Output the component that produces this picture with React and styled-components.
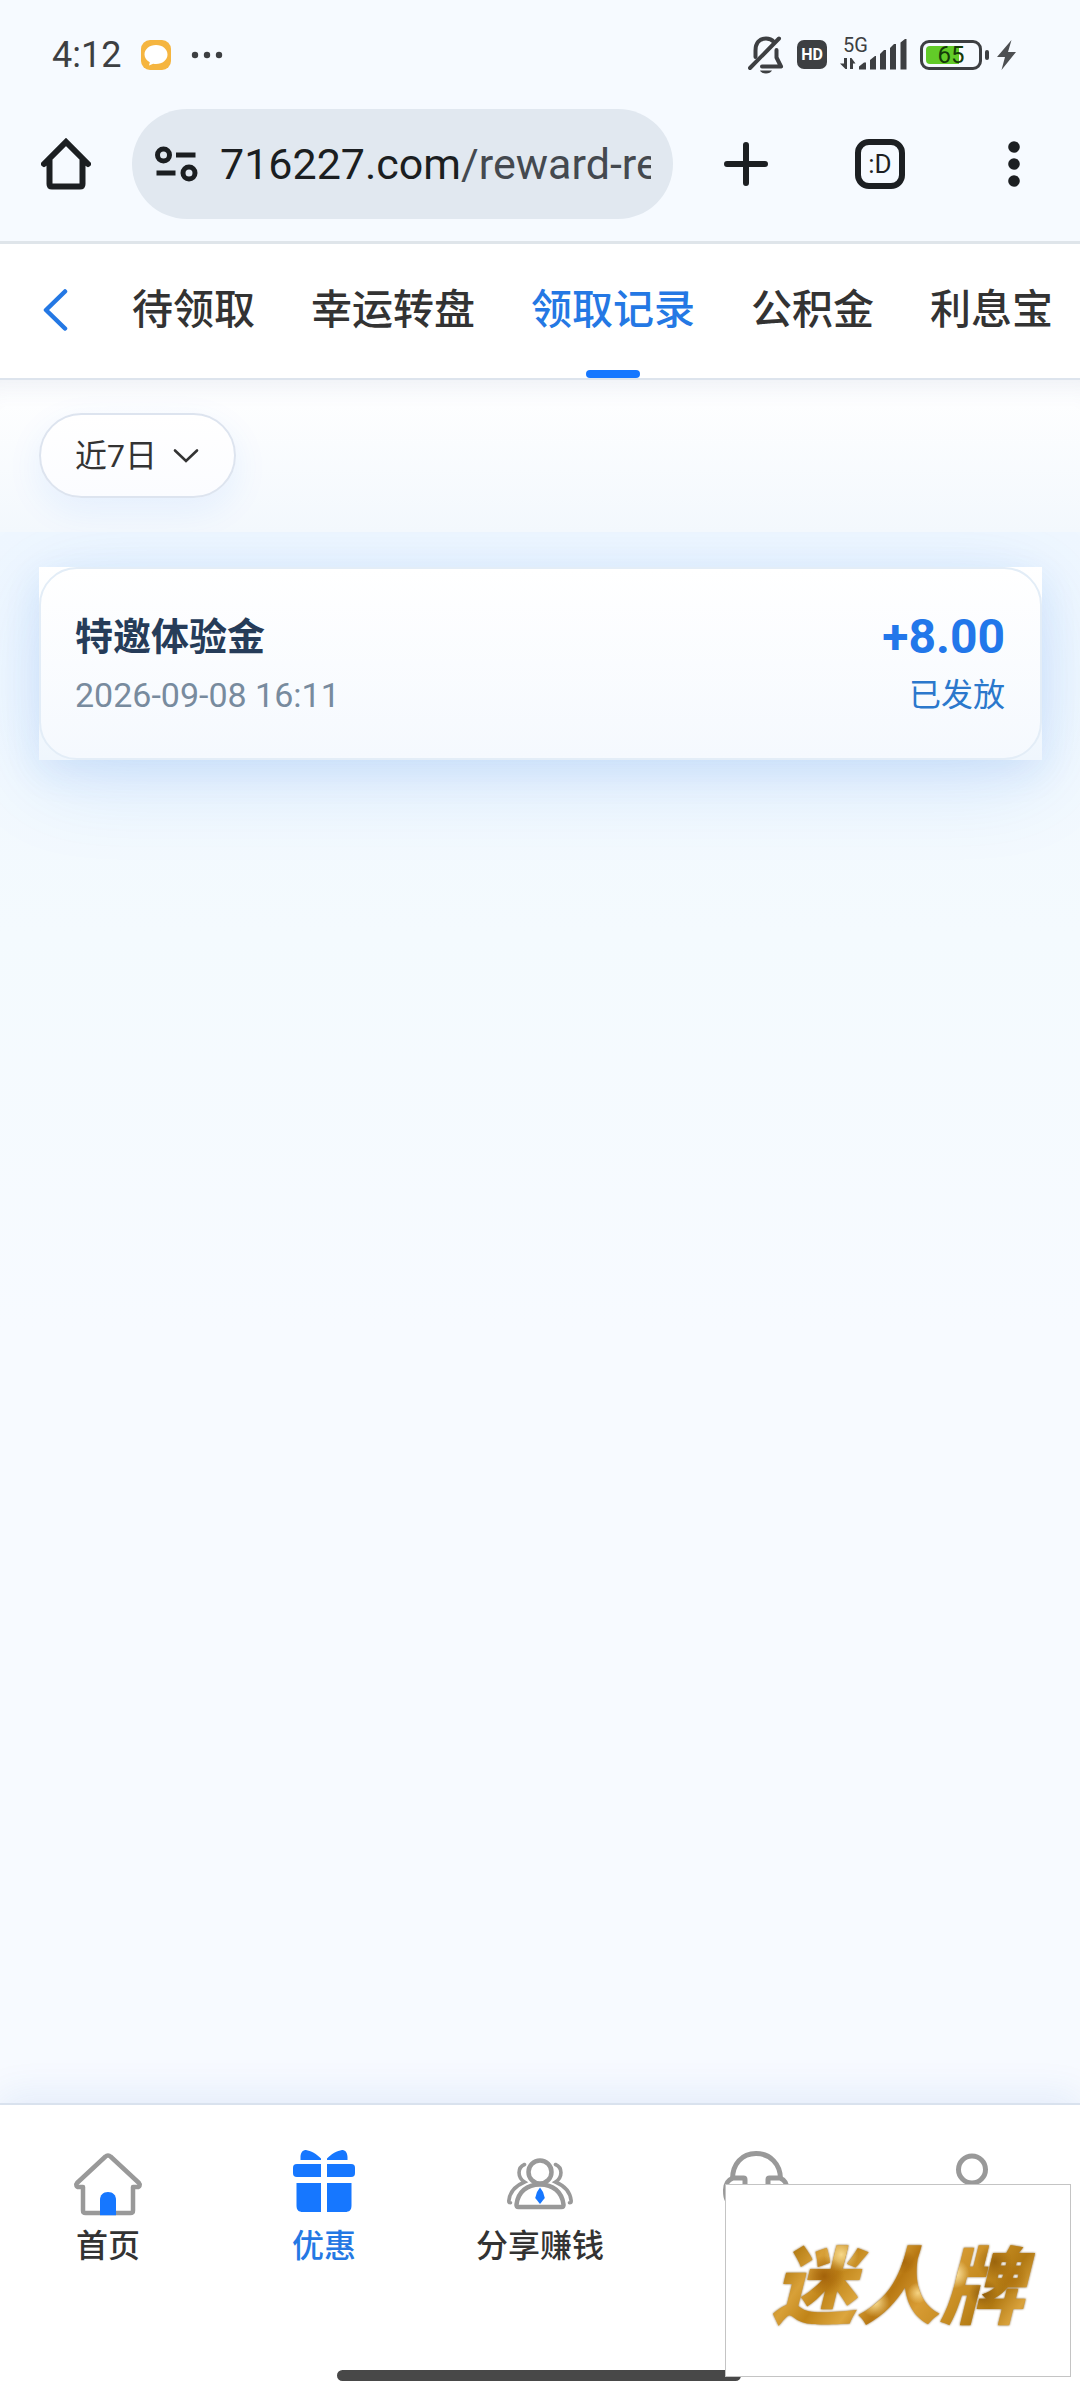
import { useState } from "react";
import styled, { createGlobalStyle } from "styled-components";

const GlobalStyle = createGlobalStyle`
  *, *::before, *::after {
    box-sizing: border-box;
  }

  body {
    margin: 0;
    background: #f6faff;
    color: #333;
    font-family: Roboto, "Noto Sans CJK SC", sans-serif;
  }

  button {
    padding: 0;
    border: 0;
    background: none;
    color: inherit;
    font: inherit;
    cursor: pointer;
  }

  svg {
    display: block;
    flex: none;
  }
`;

const Page = styled.div`
  display: flex;
  flex-direction: column;
  min-height: 100vh;
`;

const BrowserChrome = styled.div`
  background: #f6faff;
  border-bottom: 3px solid #dfe5ea;
`;

const StatusBar = styled.div`
  display: flex;
  align-items: center;
  justify-content: space-between;
  height: 109px;
  padding: 0 64px 0 52px;
  color: #3d3f42;
`;

const StatusGroup = styled.div`
  display: flex;
  align-items: center;
  gap: ${({ $gap }) => $gap}px;
`;

const Clock = styled.time`
  font-size: 36px;
  line-height: 40px;
`;

const HdBadge = styled.span`
  width: 30px;
  border-radius: 7px;
  background: #3d3f42;
  color: #fff;
  font-size: 16px;
  font-weight: 700;
  line-height: 29px;
  text-align: center;
`;

const Network = styled.div`
  display: flex;
  position: relative;

  span {
    position: absolute;
    top: -4px;
    left: 3px;
    font-size: 20px;
    line-height: 20px;
  }
`;

const Battery = styled.div`
  display: flex;
  align-items: center;
  gap: 3px;

  &::after {
    content: "";
    width: 4px;
    height: 10px;
    border-radius: 2px;
    background: #3d3f42;
  }
`;

const BatteryBody = styled.div`
  width: 62px;
  height: 30px;
  padding: 3px;
  border: 3px solid #3d3f42;
  border-radius: 9px;
  color: #143a08;
  font-size: 24px;
  line-height: 18px;
  text-align: center;
`;

const BatteryLevel = styled.div`
  border-radius: 4px;
  background: linear-gradient(90deg, #62cb28 65%, transparent 65%);
`;

const Toolbar = styled.div`
  display: flex;
  align-items: center;
  height: 132px;
  padding: 0 36px 22px 36px;
`;

const ToolButton = styled.button`
  display: grid;
  place-items: center;
  width: 60px;
  height: 60px;
  color: #1c1f22;
`;

const ToolActions = styled.div`
  display: flex;
  align-items: center;
  gap: 74px;
  margin-left: 43px;
`;

const AddressBar = styled.div`
  display: flex;
  flex: 1;
  align-items: center;
  gap: 22px;
  min-width: 0;
  height: 110px;
  margin-left: 36px;
  padding: 0 22px;
  border-radius: 55px;
  background: #e1e8f0;
`;

const Url = styled.span`
  flex: 1;
  overflow: hidden;
  color: #44494f;
  font-size: 43px;
  line-height: 56px;
  white-space: nowrap;

  b {
    color: #1b1e21;
    font-weight: 400;
  }
`;

const TabCount = styled.span`
  width: 50px;
  border: 6px solid #1c1f22;
  border-radius: 14px;
  font-size: 26px;
  line-height: 38px;
  text-align: center;
`;

const TabBar = styled.nav`
  display: flex;
  height: 136px;
  padding-left: 39px;
  overflow: hidden;
  border-bottom: 2px solid #dde4ed;
  background: #fff;
`;

const BackButton = styled.button`
  width: 30px;
  margin-right: 63px;
  color: #2478e4;
`;

const TabList = styled.div`
  display: flex;
  gap: 56px;
`;

const Tab = styled.button`
  display: flex;
  flex: none;
  flex-direction: column;
  align-items: center;
  padding-top: 39px;
  color: ${({ $active }) => ($active ? "#2478e4" : "#333")};
  font-size: 41px;
  font-weight: 500;
  line-height: 54px;
  white-space: nowrap;

  &::after {
    content: "";
    width: 54px;
    height: 8px;
    margin-top: 33px;
    border-radius: 4px;
    background: ${({ $active }) => ($active ? "#1677ff" : "transparent")};
  }
`;

const FilterBar = styled.div`
  padding: 33px 39px 34px;
  background: linear-gradient(180deg, #fff 0%, #f3f8fd 100%);
  box-shadow: inset 0 28px 24px -22px rgba(40, 80, 140, 0.09);
`;

const FilterButton = styled.button`
  display: flex;
  align-items: center;
  gap: 16px;
  height: 85px;
  padding: 0 35px 0 34px;
  border: 2px solid #dde4ef;
  border-radius: 43px;
  background: linear-gradient(180deg, #fff, #fbfcff);
  box-shadow: 0 12px 36px rgba(22, 119, 255, 0.08);
  font-size: 32px;
  line-height: 44px;
`;

const Records = styled.main`
  flex: 1;
  padding: 35px 38px 35px 39px;
  overflow: hidden;
  background: linear-gradient(180deg, #eff7ff 0, #f4fafe 400px, #f7faff 800px);
`;

/* the square wrapper carries the shadow, the rounded panel sits inside */
const RecordShell = styled.article`
  background: linear-gradient(180deg, #fff, #eff6fd);
  box-shadow: 0 18px 90px rgba(22, 110, 240, 0.14),
    0 12px 36px rgba(22, 100, 210, 0.09);
`;

const RecordCard = styled.div`
  display: flex;
  justify-content: space-between;
  padding: 42px 35px 41px 34px;
  border: 2px solid #e3edf7;
  border-radius: 38px;
  background: linear-gradient(180deg, #fff, #f5f9fe);
`;

const RecordColumn = styled.div`
  display: flex;
  flex-direction: column;
  align-items: ${({ $end }) => ($end ? "flex-end" : "flex-start")};
  gap: 10px;
`;

const RecordTitle = styled.h2`
  margin: 0;
  color: #263c59;
  font-size: 38px;
  font-weight: 700;
  line-height: 52px;
`;

const RecordAmount = styled.strong`
  color: #2277ea;
  font-size: 48px;
  font-weight: 700;
  line-height: 52px;
`;

const RecordMeta = styled.span`
  color: ${({ $status }) => ($status ? "#2b78cc" : "#788b9e")};
  font-size: ${({ $status }) => ($status ? 32 : 34)}px;
  line-height: 44px;
`;

const BottomNav = styled.nav`
  display: grid;
  grid-template-columns: repeat(5, 1fr);
  height: 297px;
  border-top: 2px solid #d9e2ee;
  background: #fff;
  box-shadow: 0 -8px 36px rgba(22, 90, 200, 0.09);
`;

const NavLink = styled.a`
  display: flex;
  flex-direction: column;
  align-items: center;
  gap: 6px;
  padding-top: 41px;
  color: ${({ $active }) => ($active ? "#2478e4" : "#333")};
  font-size: 32px;
  font-weight: 500;
  line-height: 44px;
  text-decoration: none;
  white-space: nowrap;
`;

const HomeIndicator = styled.div`
  position: fixed;
  bottom: 19px;
  left: 50%;
  width: 404px;
  height: 11px;
  margin-left: -203px;
  border-radius: 6px;
  background: #484848;
`;

const Watermark = styled.div`
  display: grid;
  position: fixed;
  right: 9px;
  bottom: 23px;
  place-items: center;
  width: 346px;
  height: 193px;
  border: 1px solid #c4c4c4;
  background: #fff;
`;

const WatermarkText = styled.span`
  padding: 0 16px;
  background: radial-gradient(circle at 24% 46%, #a3620a 0, transparent 9%),
    radial-gradient(circle at 52% 34%, #a8680c 0, transparent 7%),
    radial-gradient(circle at 84% 34%, #9a640c 0, transparent 7%),
    radial-gradient(circle at 80% 60%, #8f5c0c 0, transparent 6%),
    radial-gradient(circle at 90% 48%, #b07410 0, transparent 6%),
    radial-gradient(circle at 30% 28%, #f6d88a 0, transparent 8%),
    radial-gradient(circle at 42% 68%, #f8dc90 0, transparent 8%),
    radial-gradient(circle at 57% 60%, #f5d382 0, transparent 6%),
    radial-gradient(circle at 70% 44%, #ffe9a8 0, transparent 7%),
    linear-gradient(
      125deg,
      #a66a0c 4%,
      #b47c14 16%,
      #d8a038 24%,
      #c08418 32%,
      #dca63e 42%,
      #b87812 50%,
      #d89c34 60%,
      #c48a20 72%,
      #b07812 80%,
      #d9a23c 88%,
      #a36a10 100%
    );
  background-clip: text;
  color: transparent;
  font-family: "Noto Sans CJK SC", sans-serif;
  font-size: 84px;
  font-style: italic;
  font-weight: 900;
  line-height: 120px;
  filter: drop-shadow(0 0 1px #8a642a);
`;

const MessageIcon = () => (
  <svg width="30" height="30" viewBox="0 0 30 30">
    <rect width="30" height="30" rx="9" fill="#f5b540" />
    <path
      d="M15 5c6.600 0 11.500 4.200 11.500 9.500S21.600 24 15 24c-1 0-2 0-2.800-.3L8 25.500l.8-3.200C5.600 20.600 3.500 17.800 3.500 14.500 3.500 9.200 8.400 5 15 5z"
      fill="#fff"
    />
  </svg>
);

const EllipsisIcon = () => (
  <svg width="32" height="8" viewBox="0 0 32 8" fill="currentColor">
    <circle cx="4" cy="4" r="3.200" />
    <circle cx="16" cy="4" r="3.200" />
    <circle cx="28" cy="4" r="3.200" />
  </svg>
);

const MutedBellIcon = () => (
  <svg width="36" height="38" viewBox="0 0 36 38" fill="none">
    <g stroke="currentColor" strokeWidth="4" strokeLinecap="round">
      <path d="M7.500 21v-6.500C7.500 7 11.500 2.500 18 2.500c3.500 0 6 1.200 8 3.500" />
      <path d="M28.500 14v7.500L33 30.500H14" strokeLinejoin="round" />
      <path d="M2 32 31 2.500" />
    </g>
    <path d="M12 34.500h12c-1 2-3.300 3-6 3s-5-1-6-3z" fill="currentColor" />
  </svg>
);

const SignalIcon = () => (
  <svg width="67" height="31" viewBox="0 0 67 31" fill="currentColor">
    <path d="M4 19h3v11H5.500L0 24.500h4zM10 30V19h1.500l4 5.500H13V30z" />
    <path d="M19 30.500v-3l5-4h2v7zM30 30.500V21l5-4h1v13.500zM40 30.500V15l4-4h2v19.500zM50 30.500V9l4-4h2v25.500zM60.500 30.500V3.500L65 0h1.500v30.500z" />
  </svg>
);

const BoltIcon = () => (
  <svg width="19" height="30" viewBox="0 0 19 30" fill="#4d4f52">
    <path d="M14.500 0 0 17h8L4.500 30 19 12h-8z" />
  </svg>
);

const BrowserHomeIcon = () => (
  <svg width="50" height="52" viewBox="0 0 50 52" fill="none">
    <path
      d="M3 26 25 4l22 22M8.500 22v24c0 1.700.8 2.500 2.500 2.500h28c1.700 0 2.500-.8 2.500-2.500V22"
      stroke="currentColor"
      strokeWidth="6"
      strokeLinecap="round"
    />
  </svg>
);

const SiteInfoIcon = () => (
  <svg width="44" height="36" viewBox="0 0 44 36" fill="none">
    <g stroke="#1b1e21" strokeWidth="5">
      <circle cx="9.500" cy="9" r="6" />
      <circle cx="35" cy="27" r="6" />
      <path d="M22 9h19.500M2.500 27h19" />
    </g>
  </svg>
);

const PlusIcon = () => (
  <svg width="44" height="44" viewBox="0 0 44 44" fill="none">
    <path
      d="M22 3v38M3 22h38"
      stroke="currentColor"
      strokeWidth="6"
      strokeLinecap="round"
    />
  </svg>
);

const MoreIcon = () => (
  <svg width="12" height="46" viewBox="0 0 12 46" fill="currentColor">
    <circle cx="6" cy="6" r="5.800" />
    <circle cx="6" cy="23" r="5.800" />
    <circle cx="6" cy="40" r="5.800" />
  </svg>
);

const BackIcon = () => (
  <svg width="30" height="44" viewBox="0 0 30 44" fill="none">
    <path
      d="M26 2.500 7 21l19 18.500"
      stroke="currentColor"
      strokeWidth="4.500"
      strokeLinecap="round"
      strokeLinejoin="round"
    />
  </svg>
);

const ChevronIcon = () => (
  <svg width="26" height="16" viewBox="0 0 26 16" fill="none">
    <path
      d="M2 2.500 13 13 24 2.500"
      stroke="#333"
      strokeWidth="2.600"
      strokeLinecap="round"
    />
  </svg>
);

const HomeIcon = () => (
  <svg width="72" height="72" viewBox="0 0 72 72" fill="none">
    <path
      d="M33.500 10.500a3.500 3.500 0 0 1 5 0L67 37c1.500 1.600.5 4-1.500 4H61v23.500c0 1.500-1 2.500-2.500 2.500h-45c-1.500 0-2.500-1-2.500-2.500V41H6.500C4.500 41 3.500 38.600 5 37z"
      stroke="#999"
      strokeWidth="4.500"
      strokeLinejoin="round"
    />
    <path d="M28 69.200V54c0-5 3-8 8-8s8 3 8 8v15.200z" fill="#1677ff" />
  </svg>
);

const GiftIcon = () => (
  <svg width="72" height="72" viewBox="0 1 72 72" fill="#1677ff">
    <path d="M12.500 15V12c0-3.500 2-7.500 5.500-7 4.500.8 11 4 15 8.500V15zM59.500 15V12c0-3.500-2-7.500-5.500-7-4.500.8-11 4-15 8.500V15z" />
    <path d="M33 19v13H9c-3 0-4-1.200-4-4v-5c0-2.800 1-4 4-4zM39 19h24c3 0 4 1.200 4 4v5c0 2.800-1 4-4 4H39z" />
    <path d="M33 38v29H15c-4.500 0-6.500-2-6.500-6.500V38zM39 38h24.500v22.500c0 4.500-2 6.500-6.500 6.500H39z" />
  </svg>
);

const ShareIcon = () => (
  <svg width="72" height="72" viewBox="0 0 72 72" fill="none">
    <g
      stroke="#999"
      strokeWidth="4.500"
      strokeLinecap="round"
      strokeLinejoin="round"
    >
      <circle cx="36" cy="26" r="11.500" />
      <path d="M12.500 58.500C14 46 23 38.500 36 38.500S58 46 59.500 58.500c.2 1.800-.5 2.500-2 2.500h-43c-1.500 0-2.200-.7-2-2.500z" />
    </g>
    <g stroke="#999" strokeWidth="3.600" strokeLinecap="round">
      <path d="M20.500 18.500c-7 3-7.500 12.500 0 17.500C11 40 5.500 47 4.800 55c0 1.200.6 1.800 1.700 1.800M51.500 18.500c7 3 7.500 12.500 0 17.500C61 40 66.500 47 67.200 55c0 1.200-.6 1.800-1.700 1.800" />
    </g>
    <path d="m36 41.500 3 4.500 1.800 6L36 58l-4.800-6L33 46z" fill="#1677ff" />
  </svg>
);

const ServiceIcon = () => (
  <svg width="72" height="72" viewBox="0 0 72 72" fill="none">
    <g stroke="#999" strokeWidth="5" strokeLinejoin="round">
      <path d="M12.500 33C12.500 18 22 7.500 36 7.500S60.500 18 60.500 33" />
      <path d="M13 32h10.500c1 0 1.500.5 1.500 1.500V57H14C7 57 5.500 53 5.500 44c0-7 2.500-10 7.500-12zM60 32H49.500c-1 0-1.500.5-1.500 1.500V57h10c7 0 9-4 9-13 0-7-2-10-7-12z" />
    </g>
  </svg>
);

const ProfileIcon = () => (
  <svg width="72" height="72" viewBox="0 0 72 72" fill="none">
    <g stroke="#999" strokeWidth="5">
      <circle cx="36" cy="23.500" r="13.500" />
      <path d="M8 66c2-16 13-26 28-26s26 10 28 26z" />
    </g>
  </svg>
);

const TABS = ["待领取", "幸运转盘", "领取记录", "公积金", "利息宝"];

const RECORDS = [
  {
    id: 1,
    title: "特邀体验金",
    time: "2026-09-08 16:11",
    amount: "+8.00",
    status: "已发放",
  },
];

const NAV_ITEMS = [
  { key: "home", label: "首页", Icon: HomeIcon },
  { key: "promo", label: "优惠", Icon: GiftIcon, active: true },
  { key: "share", label: "分享赚钱", Icon: ShareIcon },
  { key: "service", ariaLabel: "客服", Icon: ServiceIcon },
  { key: "profile", ariaLabel: "我的", Icon: ProfileIcon },
];

function Browser() {
  return (
    <BrowserChrome>
      <StatusBar>
        <StatusGroup $gap={20}>
          <Clock>4:12</Clock>
          <MessageIcon />
          <EllipsisIcon />
        </StatusGroup>
        <StatusGroup $gap={13}>
          <MutedBellIcon />
          <HdBadge>HD</HdBadge>
          <Network>
            <span>5G</span>
            <SignalIcon />
          </Network>
          <StatusGroup $gap={8}>
            <Battery>
              <BatteryBody>
                <BatteryLevel>65</BatteryLevel>
              </BatteryBody>
            </Battery>
            <BoltIcon />
          </StatusGroup>
        </StatusGroup>
      </StatusBar>
      <Toolbar>
        <ToolButton aria-label="主页">
          <BrowserHomeIcon />
        </ToolButton>
        <AddressBar>
          <SiteInfoIcon />
          <Url>
            <b>716227.com</b>/reward-re
          </Url>
        </AddressBar>
        <ToolActions>
          <ToolButton aria-label="新标签页">
            <PlusIcon />
          </ToolButton>
          <ToolButton>
            <TabCount>:D</TabCount>
          </ToolButton>
          <ToolButton aria-label="更多">
            <MoreIcon />
          </ToolButton>
        </ToolActions>
      </Toolbar>
    </BrowserChrome>
  );
}

function Record({ record }) {
  return (
    <RecordShell>
      <RecordCard>
        <RecordColumn>
          <RecordTitle>{record.title}</RecordTitle>
          <RecordMeta>{record.time}</RecordMeta>
        </RecordColumn>
        <RecordColumn $end>
          <RecordAmount>{record.amount}</RecordAmount>
          <RecordMeta $status>{record.status}</RecordMeta>
        </RecordColumn>
      </RecordCard>
    </RecordShell>
  );
}

function App() {
  const [activeTab, setActiveTab] = useState("领取记录");

  return (
    <Page>
      <GlobalStyle />
      <Browser />
      <TabBar>
        <BackButton aria-label="返回">
          <BackIcon />
        </BackButton>
        <TabList>
          {TABS.map((tab) => (
            <Tab
              key={tab}
              $active={tab === activeTab}
              onClick={() => setActiveTab(tab)}
            >
              {tab}
            </Tab>
          ))}
        </TabList>
      </TabBar>
      <FilterBar>
        <FilterButton>
          近7日
          <ChevronIcon />
        </FilterButton>
      </FilterBar>
      <Records>
        {RECORDS.map((record) => (
          <Record key={record.id} record={record} />
        ))}
      </Records>
      <BottomNav>
        {NAV_ITEMS.map(({ key, label, ariaLabel, Icon, active }) => (
          <NavLink
            key={key}
            href={`#${key}`}
            aria-label={ariaLabel}
            $active={active}
          >
            <Icon />
            {label}
          </NavLink>
        ))}
      </BottomNav>
      <HomeIndicator />
      <Watermark>
        <WatermarkText>迷人牌</WatermarkText>
      </Watermark>
    </Page>
  );
}

export default App;
